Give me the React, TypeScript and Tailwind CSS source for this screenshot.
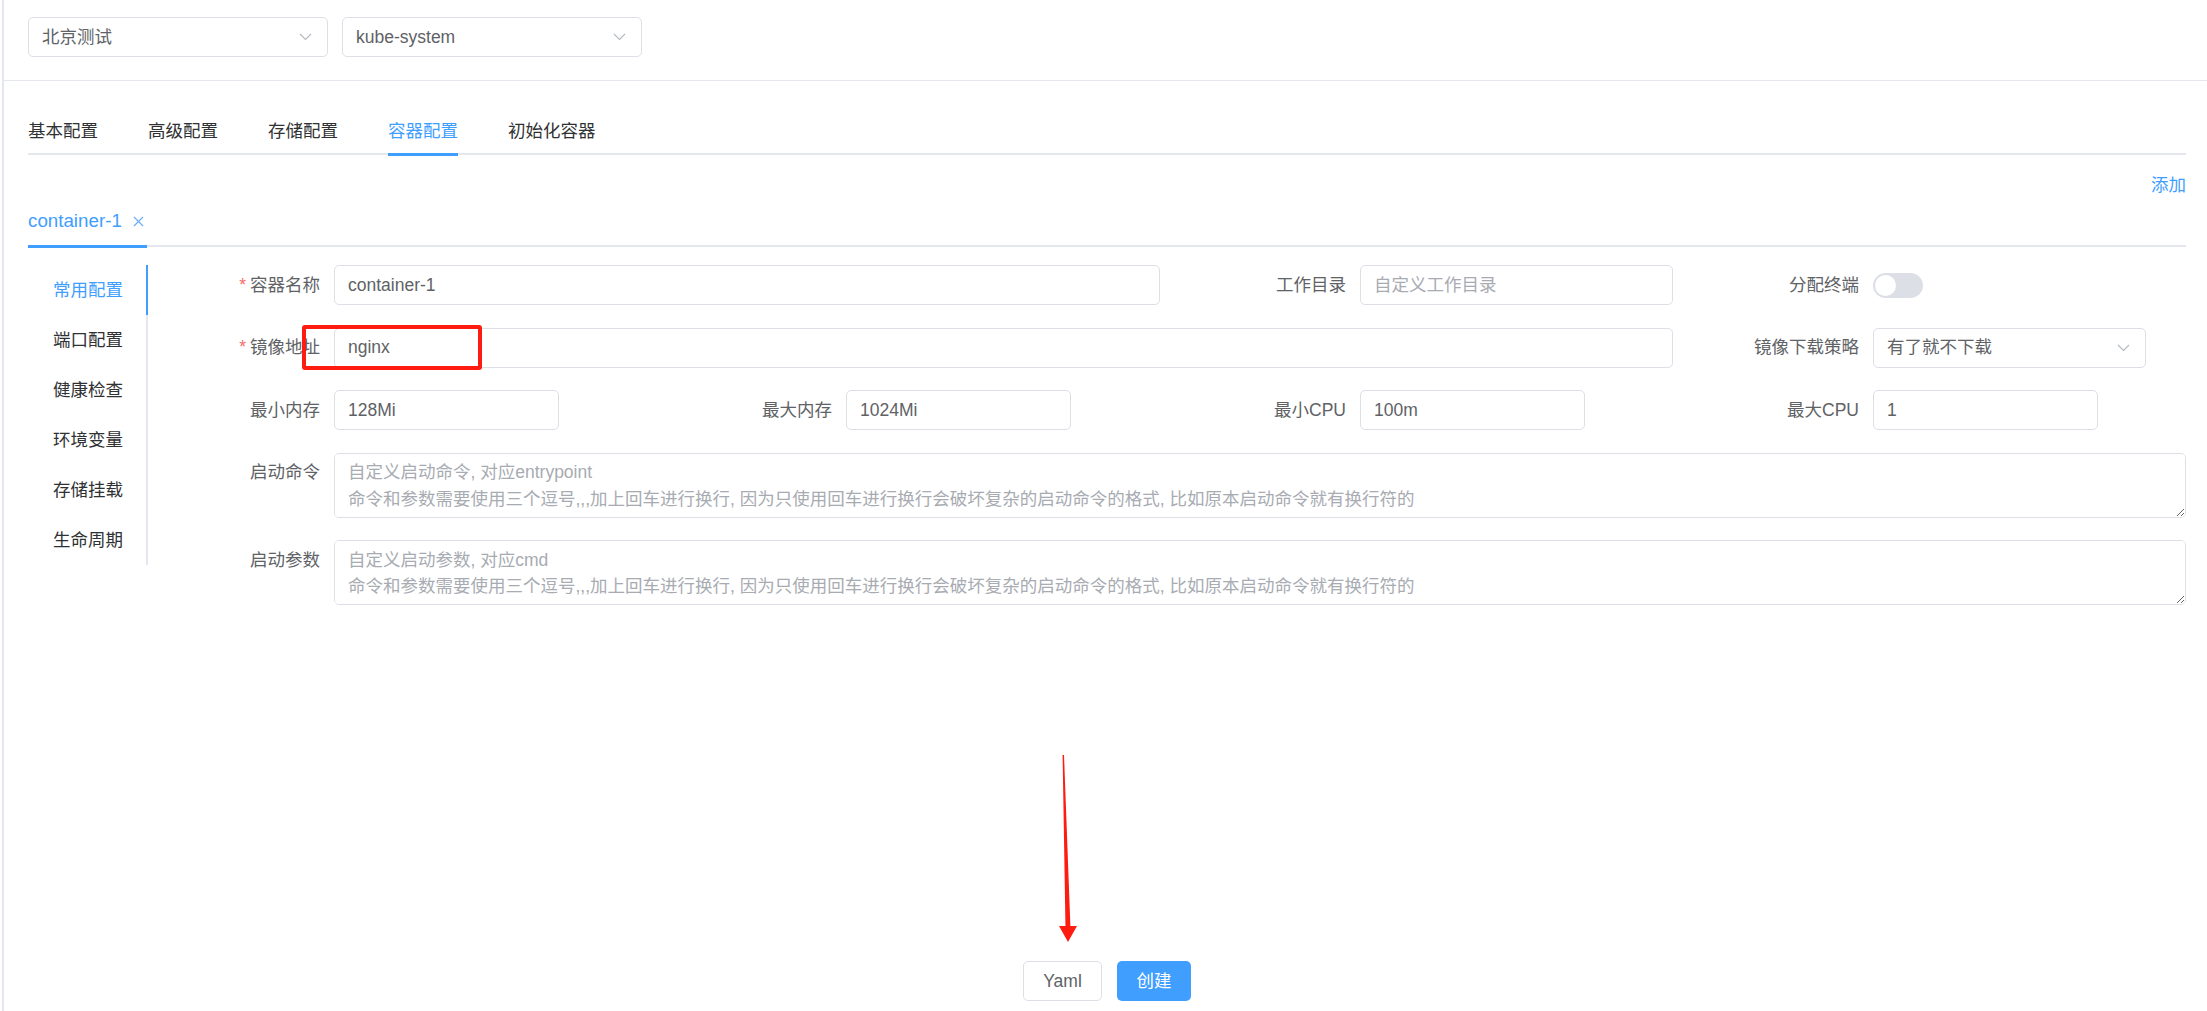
import React from "react";

const Chevron = () => (
  <svg width="13" height="8" viewBox="0 0 13 8" className="shrink-0">
    <polyline points="1,1 6.5,6.5 12,1" fill="none" stroke="#b4b8bf" strokeWidth="1.1" />
  </svg>
);

const CloseX = () => (
  <svg width="11" height="11" viewBox="0 0 11 11" className="shrink-0">
    <path d="M1 1 L10 10 M10 1 L1 10" stroke="#6aaef5" strokeWidth="1.2" fill="none" />
  </svg>
);

function Select({ text, width }: { text: string; width: string }) {
  return (
    <div
      className={`flex h-[40px] items-center justify-between rounded-[5px] border border-[#dcdfe6] bg-white pl-[13px] pr-[15px] text-[#606266] ${width}`}
    >
      <span>{text}</span>
      <Chevron />
    </div>
  );
}

function Label({ text, required }: { text: string; required?: boolean }) {
  return (
    <div className="flex h-[40px] items-center justify-end whitespace-nowrap pr-[14px] text-[#606266]">
      {required && <span className="mr-[4px] text-[#f56c6c]">*</span>}
      <span>{text}</span>
    </div>
  );
}

function Input({ value, placeholder, className = "" }: { value?: string; placeholder?: string; className?: string }) {
  return (
    <input
      readOnly
      value={value ?? ""}
      placeholder={placeholder}
      className={`h-[40px] rounded-[5px] border border-[#dcdfe6] bg-white px-[13px] text-[#606266] outline-none placeholder:text-[#a8abb2] ${className}`}
    />
  );
}

function Area({ placeholder }: { placeholder: string }) {
  return (
    <textarea
      readOnly
      placeholder={placeholder}
      className="col-span-7 h-[65px] rounded-[5px] border border-[#dcdfe6] bg-white px-[13px] py-[5.5px] leading-[26.5px] text-[#606266] outline-none placeholder:text-[#a8abb2]"
    />
  );
}

export default function App() {
  const tabs = ["基本配置", "高级配置", "存储配置", "容器配置", "初始化容器"];
  const menu = ["常用配置", "端口配置", "健康检查", "环境变量", "存储挂载", "生命周期"];
  const hint = "命令和参数需要使用三个逗号,,,加上回车进行换行, 因为只使用回车进行换行会破坏复杂的启动命令的格式, 比如原本启动命令就有换行符的";

  return (
    <div className="relative h-screen w-full overflow-hidden bg-white pl-[2px] font-['Liberation_Sans','Noto_Sans_CJK_SC',sans-serif] text-[17.5px]">
      <div className="flex h-full flex-col border-l-2 border-[#e4e7ed]">
        {/* top selects */}
        <div className="flex gap-[14px] border-b border-[#e4e7ed] pb-[23px] pl-[24px] pt-[17px]">
          <Select text="北京测试" width="w-[300px]" />
          <Select text="kube-system" width="w-[300px]" />
        </div>

        <div className="flex flex-1 flex-col pl-[24px] pr-[21px]">
          {/* main tabs */}
          <div className="mt-[28px] flex gap-[50px] border-b-2 border-[#e4e7ed]">
            {tabs.map((t) => (
              <div
                key={t}
                className={`relative flex h-[44px] items-center ${t === "容器配置" ? "text-[#409eff]" : "text-[#303133]"}`}
              >
                {t}
                {t === "容器配置" && (
                  <span className="absolute bottom-[-3px] left-0 right-0 h-[3px] bg-[#409eff]" />
                )}
              </div>
            ))}
          </div>

          {/* add */}
          <div className="mt-[18px] flex h-[25px] items-center justify-end leading-[25px] text-[#409eff]">添加</div>

          {/* container tabs */}
          <div className="flex border-b-2 border-[#e4e7ed]">
            <div className="relative flex h-[47px] items-center pr-[3px] text-[18.75px] text-[#409eff]">
              <span>container-1</span>
              <span className="ml-[11px] flex items-center">
                <CloseX />
              </span>
              <span className="absolute bottom-[-3px] left-0 right-0 h-[3px] bg-[#409eff]" />
            </div>
          </div>

          {/* body */}
          <div className="mt-[18px] flex">
            <div className="relative w-[120px] self-start border-r-2 border-[#e4e7ed]">
              {menu.map((m, i) => (
                <div
                  key={m}
                  className={`flex h-[50px] items-center justify-end pr-[23px] ${i === 0 ? "text-[#409eff]" : "text-[#303133]"}`}
                >
                  {m}
                </div>
              ))}
              <span className="absolute right-[-2px] top-0 h-[50px] w-[2px] bg-[#409eff]" />
            </div>

            <div className="grid grid-cols-[186px_313px_199px_314px_200px_313px_200px_313px] content-start gap-y-[22.5px]">
              {/* row 1 */}
              <Label text="容器名称" required />
              <Input value="container-1" className="col-span-3" />
              <Label text="工作目录" />
              <Input placeholder="自定义工作目录" />
              <Label text="分配终端" />
              <div className="flex h-[40px] items-center">
                <div className="flex h-[25px] w-[50px] items-center rounded-full bg-[#dcdfe6] px-[2px]">
                  <div className="h-[21px] w-[21px] rounded-full bg-white" />
                </div>
              </div>

              {/* row 2 */}
              <Label text="镜像地址" required />
              <Input value="nginx" className="col-span-5" />
              <Label text="镜像下载策略" />
              <Select text="有了就不下载" width="w-[273px]" />

              {/* row 3 */}
              <Label text="最小内存" />
              <div>
                <Input value="128Mi" className="w-[225px]" />
              </div>
              <Label text="最大内存" />
              <div>
                <Input value="1024Mi" className="w-[225px]" />
              </div>
              <Label text="最小CPU" />
              <div>
                <Input value="100m" className="w-[225px]" />
              </div>
              <Label text="最大CPU" />
              <div>
                <Input value="1" className="w-[225px]" />
              </div>

              {/* row 4 */}
              <Label text="启动命令" />
              <Area placeholder={"自定义启动命令, 对应entrypoint\n" + hint} />

              {/* row 5 */}
              <Label text="启动参数" />
              <Area placeholder={"自定义启动参数, 对应cmd\n" + hint} />
            </div>
          </div>

          <div className="flex-1" />

          {/* buttons */}
          <div className="flex justify-center gap-[15px] pb-[10px]">
            <button className="flex h-[40px] w-[79px] items-center justify-center rounded-[5px] border border-[#dcdfe6] bg-white text-[#606266]">
              Yaml
            </button>
            <button className="flex h-[40px] w-[74px] items-center justify-center rounded-[5px] bg-[#409eff] text-white">
              创建
            </button>
          </div>
        </div>
      </div>

      {/* annotations */}
      <div className="pointer-events-none absolute left-[302px] top-[325px] h-[45px] w-[180px] rounded-[3px] border-[4px] border-[#fe1c10]" />
      <svg
        className="pointer-events-none absolute left-[1050px] top-[750px]"
        width="35"
        height="200"
        viewBox="0 0 35 200"
      >
        <polygon points="12.6,5 14,5 20.5,179 15.5,179" fill="#fe1c10" />
        <polygon points="9,176 27,176 18,192" fill="#fe1c10" />
      </svg>
    </div>
  );
}
